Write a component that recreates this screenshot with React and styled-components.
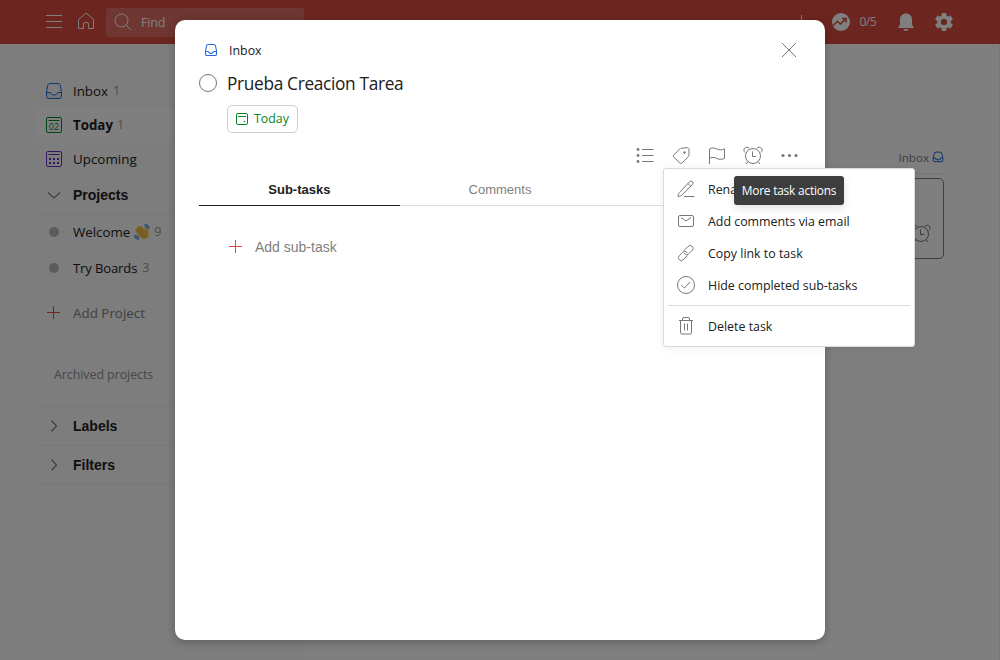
import React from 'react';
import styled, { createGlobalStyle } from 'styled-components';

const GlobalStyle = createGlobalStyle`
  * { box-sizing: border-box; }
  body { margin: 0; background: #fff; color: #202020; font-family: 'Open Sans', 'Noto Sans', sans-serif; }
  svg { display: block; flex: none; }
`;

const Page = styled.div`
  position: relative;
  width: 1000px;
  height: 660px;
  overflow: hidden;
  display: flex;
  flex-direction: column;
`;

const TopBar = styled.header`
  height: 44px;
  flex: none;
  background: #db4c3f;
  color: #fff;
  display: flex;
  align-items: center;
  justify-content: space-between;
  padding: 0 44px 0 42px;
`;

const BarGroup = styled.div`
  display: flex;
  align-items: center;
  gap: ${p => p.$gap || 0}px;
`;

const SearchField = styled.div`
  width: 198px;
  height: 29px;
  margin-left: 8px;
  padding-left: 5px;
  border-radius: 3px;
  background: rgba(255, 255, 255, 0.19);
  display: flex;
  align-items: center;
  gap: 6px;
`;

const Label = styled.span`
  font-family: ${p => (p.$arial ? "'Liberation Sans', Arial, sans-serif" : "'Open Sans', 'Noto Sans', sans-serif")};
  font-size: ${p => p.$size || 12.4}px;
  font-weight: ${p => (p.$bold ? 700 : 400)};
  letter-spacing: ${p => p.$track || 0}px;
  color: ${p => p.$color || 'inherit'};
  padding-top: ${p => p.$drop || 0}px;
  line-height: 20px;
  white-space: nowrap;
`;

const Body = styled.div`
  flex: 1;
  display: flex;
  min-height: 0;
`;

const Sidebar = styled.nav`
  width: 305px;
  flex: none;
  background: #fafafa;
  padding: 30px 0 0 35px;
`;

const NavRow = styled.div`
  height: ${p => p.$h || 34}px;
  margin-top: ${p => p.$mt || 0}px;
  padding-left: ${p => (p.$indent === undefined ? 7 : p.$indent)}px;
  display: flex;
  align-items: center;
  gap: 7px;
  border-radius: ${p => (p.$active ? 5 : 0)}px;
  background: ${p => (p.$active ? '#fff' : 'transparent')};
  border-top: ${p => (p.$top ? '1px solid #f0f0f0' : '0')};
  border-bottom: ${p => (p.$line ? '1px solid #f0f0f0' : '0')};
`;

const Name = styled.div`
  display: flex;
  align-items: center;
  gap: ${p => p.$gap || 5}px;
`;

const Bullet = styled.i`
  width: 10px;
  height: 10px;
  margin: 0 7px;
  border-radius: 50%;
  background: #b8b8b8;
`;

const Main = styled.main`
  flex: 1;
  padding: 103px 55px 0;
  border-right: 1px solid #f0f0f0;
`;

const Source = styled.div`
  height: 27px;
  display: flex;
  justify-content: flex-end;
  gap: 3px;
  align-items: flex-start;
  border-bottom: 1px solid #ececec;

  svg { margin-top: 4px; }
`;

const Card = styled.div`
  height: 81px;
  margin-top: 4px;
  padding: 42px 10px 0 0;
  border: 1px solid #7c7c7c;
  border-radius: 5px;
  display: flex;
  justify-content: flex-end;
`;

const Overlay = styled.div`
  position: absolute;
  inset: 0;
  background: rgba(0, 0, 0, 0.5);
  display: flex;
  justify-content: center;
  align-items: flex-start;
  padding-top: 20px;
`;

const Dialog = styled.section`
  width: 650px;
  height: 620px;
  padding: 18px 24px;
  border-radius: 10px;
  background: #fff;
  box-shadow: 0 2px 10px rgba(0, 0, 0, 0.25);
`;

const DialogHead = styled.div`
  height: 24px;
  display: flex;
  align-items: center;
  justify-content: space-between;
`;

const Location = styled.div`
  display: flex;
  align-items: center;
  gap: 11px;
  padding-left: 5px;
`;

const TitleRow = styled.div`
  height: 42px;
  display: flex;
  align-items: center;
  gap: 10px;
`;

const Title = styled.h1`
  margin: 0;
  padding-top: 1px;
  font-size: 17.3px;
  font-weight: 400;
  line-height: 24px;
  letter-spacing: -0.33px;
`;

const Check = styled.span`
  width: 18px;
  height: 18px;
  border: 1px solid #777;
  border-radius: 50%;
`;

const DateButton = styled.div`
  width: 71px;
  height: 28px;
  margin: 1px 0 0 28px;
  padding-left: 7px;
  border: 1px solid #cfcfcf;
  border-radius: 5px;
  display: flex;
  align-items: center;
  gap: 5px;
  color: #058527;
`;

const Tools = styled.div`
  height: 24px;
  margin-top: 10px;
  display: flex;
  justify-content: flex-end;
  gap: 12px;
`;

const Tabs = styled.div`
  height: 38px;
  margin-top: 1px;
  display: flex;
`;

const Tab = styled.div`
  flex: 1;
  display: flex;
  justify-content: center;
  align-items: center;
  padding-top: 7px;
  color: ${p => (p.$on ? '#202020' : '#808080')};
  border-bottom: 1px solid ${p => (p.$on ? '#202020' : '#dcdcdc')};
`;

const AddRow = styled.div`
  display: flex;
  align-items: center;
  gap: 7px;
  margin: 29px 0 0 25px;
`;

const Menu = styled.div`
  position: absolute;
  left: 663px;
  top: 168px;
  width: 252px;
  height: 179px;
  padding: 4px;
  background: #fff;
  border: 1px solid #dadada;
  border-radius: 3px;
  box-shadow: 0 1px 8px rgba(0, 0, 0, 0.08);
`;

const MenuItem = styled.div`
  height: 32px;
  padding-left: 6px;
  display: flex;
  align-items: center;
  gap: 10px;
`;

const Divider = styled.div`
  height: 1px;
  margin: 4px 0;
  background: #dcdcdc;
`;

const Tooltip = styled.div`
  position: absolute;
  left: 734px;
  top: 176px;
  width: 110px;
  height: 29px;
  padding-bottom: 1px;
  border-radius: 3px;
  background: #3d3d3d;
  color: #fff;
  display: flex;
  align-items: center;
  justify-content: center;
  box-shadow: 0 3px 10px rgba(0, 0, 0, 0.12);
`;

const Icon = ({ size = 24, color = '#777', children }) => (
  <svg width={size} height={size} viewBox="0 0 24 24" fill="none" stroke={color} strokeWidth="1">
    {children}
  </svg>
);

const InboxIcon = () => (
  <Icon color="#246fe0">
    <path fill="#246fe0" fillOpacity=".1" stroke="none" d="M4.500 13.500h4.200c.5 1.500 1.700 2.300 3.300 2.300s2.800-.8 3.300-2.300h4.200v4a2 2 0 0 1-2 2h-11a2 2 0 0 1-2-2z" />
    <path d="M7.800 4.500h8.400a2 2 0 0 1 1.950 1.500l1.350 7v4.500a2 2 0 0 1-2 2h-11a2 2 0 0 1-2-2V13l1.350-7A2 2 0 0 1 7.800 4.500z" />
    <path d="M4.500 13.500H8c.7 0 .8.300 1.100.9.5 1 1.500 1.600 2.900 1.600s2.400-.6 2.900-1.600c.3-.6.400-.9 1.100-.9h3.500" />
  </Icon>
);

const SmallInboxIcon = () => (
  <svg width="14" height="14" viewBox="0 0 14 14" fill="none" stroke="#246fe0" strokeWidth="1.100">
    <path d="M4 1.500h6a1.500 1.500 0 0 1 1.450 1.150L12.500 8v3a1.500 1.500 0 0 1-1.500 1.500H3A1.500 1.500 0 0 1 1.500 11V8l1.050-5.350A1.500 1.500 0 0 1 4 1.500z" />
    <path fill="#246fe0" fillOpacity=".12" d="M1.500 8.500h2.300c.5 0 .6.200.8.600.4.800 1.200 1.400 2.400 1.400s2-.6 2.400-1.400c.2-.4.300-.6.800-.6h2.300" />
  </svg>
);

const TinyInboxIcon = () => (
  <svg width="12" height="12" viewBox="0 0 12 12" fill="none" stroke="#3f7fe0" strokeWidth="1.200">
    <path d="M4.200 1.200h3.600c1.300 0 2 .8 2.200 2l.8 4v1.700a1.800 1.800 0 0 1-1.800 1.800H3a1.800 1.800 0 0 1-1.800-1.800V7.200l.8-4c.2-1.200.900-2 2.200-2z" />
    <path fill="#3f7fe0" fillOpacity=".25" d="M1.200 7.200h2c.3 1 1.200 1.600 2.800 1.600s2.500-.6 2.800-1.600h2" />
  </svg>
);

const PlusIcon = ({ color }) => <Icon color={color}><path d="M11.500 5v13M5 11.500h13" /></Icon>;

const AlarmIcon = () => (
  <Icon>
    <circle cx="12" cy="13" r="7.500" />
    <path d="M11.500 8.500v5H15M7 18.500 5 21M17 18.500l2 2.500" />
    <path d="M4 9.500C2.500 8 2.600 6.200 3.700 5.100s3.200-1.200 4.500.2M20 9.500c1.500-1.500 1.400-3.300.3-4.400s-3.200-1.200-4.500.2" />
  </Icon>
);

const TodayIcon = () => (
  <Icon color="#058527">
    <rect x="4.500" y="4.500" width="15" height="15" rx="1.500" />
    <path d="M6.500 7.500h11" />
    <text x="12" y="17.200" textAnchor="middle" fill="#058527" stroke="none" fontSize="9" fontFamily="Open Sans, sans-serif">02</text>
  </Icon>
);

const UpcomingIcon = () => (
  <Icon color="#692fc2">
    <rect x="4.500" y="4.500" width="15" height="15" rx="1.500" />
    <path d="M6.500 7.500h11" />
    <path strokeWidth="2" strokeDasharray="2 2" d="M7 12h10M7 16h10" />
  </Icon>
);

const WaveIcon = () => (
  <svg width="16" height="16" viewBox="0 0 16 16" fill="none">
    <path d="M10.500.8c2.500-.4 4.600 1.500 4.500 4M10.700 2.700c1.500-.1 2.400.8 2.500 2.200M.8 10.800c-.2 2.600 1.500 4.300 4.300 4.200M2.700 11.300c.1 1.400.9 2.100 2.300 2.200" stroke="#5f9fd3" strokeWidth="1.500" />
    <path d="M2 4.700c.7-.7 1.600-.4 2.100.2L3.300 3.300c-.3-1.200 1.100-1.900 1.900-.9l1 1.100c-.4-1.400 1.100-2 1.900-.9L11 6.200l.4-1.900c.3-1.300 2.300-1.100 2.500.3.200 2.500 1.300 4.700.7 6.800-.7 2.600-3.500 4-5.900 3.300C6.300 14 3.800 10.700 2 7.700c-.7-1.100-.8-2.200 0-3z" fill="#f2c14a" />
    <path d="m4 5 3.200 4.500M6.200 3.800l3 4.500" stroke="#d99a2b" strokeWidth=".6" />
  </svg>
);

const Chevron = ({ open }) => (
  <Icon color="#808080"><path strokeWidth="1.200" d={open ? 'm6 9.500 6 5.500 6-5.500' : 'm9.500 6.500 5 5.500-5 5.500'} /></Icon>
);

const menuIcons = {
  pen: <Icon><path d="M4 19.500c.2-2 .5-3 1.500-4L15.700 4.700a1.900 1.900 0 0 1 2.800 2.700L8 18c-1 1-2 1.300-4 1.500zM10 19.500h10.500M14 6.500l2.700 2.700" /></Icon>,
  mail: <Icon><rect x="4.500" y="6.500" width="15" height="11" rx="1.500" /><path d="m7 8.500 5 3.500 5-3.500" /></Icon>,
  link: (
    <Icon>
      <path d="m10 9.500 4.200-4.200a2.800 2.800 0 0 1 4 0 2.800 2.800 0 0 1 0 4l-3.500 3.500a2.800 2.800 0 0 1-4 0l-.6-.7" />
      <path d="m13.500 14.500-4.200 4.200a2.800 2.800 0 0 1-4 0 2.800 2.800 0 0 1 0-4l3.500-3.500a2.800 2.800 0 0 1 4 0l.6.700" />
    </Icon>
  ),
  check: <Icon><circle cx="12" cy="12" r="8.500" /><path d="m7.500 12.500 3 2.500 5.500-6" /></Icon>,
  trash: (
    <Icon>
      <path d="M5 6.500h14M8.500 6V5a1.500 1.500 0 0 1 1.500-1.500h4A1.500 1.500 0 0 1 15.500 5v1M6.500 7v11.500a1.500 1.500 0 0 0 1.500 1.500h8a1.500 1.500 0 0 0 1.500-1.500V7M10.500 9.500v7M13.500 9.500v7" />
    </Icon>
  ),
};

const Entry = ({ icon, text }) => (
  <MenuItem>{menuIcons[icon]}<Label $drop={2}>{text}</Label></MenuItem>
);

export default function App() {
  return (
    <Page>
      <GlobalStyle />
      <TopBar>
        <BarGroup>
          <Icon color="#fff"><path d="M4 5.500h16M4 11.500h16M4 17.500h16" /></Icon>
          <BarGroup $gap={8}>
            <span />
            <Icon color="#fff"><path d="M4.500 18.500v-9L12 3l7.500 6.500v9h-5v-4.500a1.500 1.500 0 0 0-1.500-1.500h-2A1.500 1.500 0 0 0 9.500 14v4.500z" /></Icon>
          </BarGroup>
          <SearchField>
            <Icon color="#fff"><circle cx="10.500" cy="10.500" r="6.500" /><path d="m15.500 15.500 4.500 4.500" /></Icon>
            <Label $size={12.600} $track={-0.200} $drop={2}>Find</Label>
          </SearchField>
        </BarGroup>
        <BarGroup $gap={15}>
          <PlusIcon color="#fff" />
          <BarGroup $gap={6}>
            <svg width="24" height="24" viewBox="0 0 24 24">
              <circle cx="12" cy="12" r="9" fill="#fff" />
              <path d="m4 15.500 4.500-4 3 2.500 5.500-5.500M13 8.500h4v4" fill="none" stroke="#db4c3f" strokeWidth="1.500" />
            </svg>
            <Label $size={12} $track={-0.500}>0/5</Label>
          </BarGroup>
          <BarGroup $gap={11}>
            <svg width="30" height="24" viewBox="-3 0 30 24" fill="#fff">
              <path d="M12 3.500c3.600 0 6 2.500 6 6v5.200l1.600 2.200c.4.600.1 1.100-.6 1.100H5c-.7 0-1-.5-.6-1.100L6 14.700V9.500c0-3.500 2.400-6 6-6zM9.500 19h5c-.4 1.300-1.300 2-2.500 2s-2.100-.7-2.500-2z" />
            </svg>
            <svg width="24" height="24" viewBox="0 0 24 24">
              <circle cx="12" cy="12" r="5" fill="none" stroke="#fff" strokeWidth="4" />
              <path d="M12 3v3.500M12 17.500V21M4.200 7.500l3 1.700M16.800 14.800l3 1.700M4.200 16.500l3-1.700M16.800 9.200l3-1.700" stroke="#fff" strokeWidth="4.600" />
              <circle cx="12" cy="12" r="3.100" fill="#db4c3f" />
            </svg>
          </BarGroup>
        </BarGroup>
      </TopBar>

      <Body>
        <Sidebar>
          <NavRow>
            <InboxIcon />
            <Name><Label $size={13.300}>Inbox</Label><Label $size={12.500} $color="#999">1</Label></Name>
          </NavRow>
          <NavRow $active>
            <TodayIcon />
            <Name $gap={4}><Label $size={13.300} $bold>Today</Label><Label $size={12.500} $color="#999">1</Label></Name>
          </NavRow>
          <NavRow>
            <UpcomingIcon />
            <Label $size={13.400}>Upcoming</Label>
          </NavRow>
          <NavRow $h={39} $line>
            <Chevron open />
            <Label $size={14} $bold $arial>Projects</Label>
          </NavRow>
          <NavRow $h={34}>
            <Bullet />
            <Name $gap={4}><Label $size={13.300}>Welcome</Label><WaveIcon /><Label $size={12.500} $color="#999">9</Label></Name>
          </NavRow>
          <NavRow $h={36} $mt={1}>
            <Bullet />
            <Name><Label $size={13} $track={-0.100}>Try Boards</Label><Label $size={12.500} $color="#999">3</Label></Name>
          </NavRow>
          <NavRow $h={34} $mt={10}>
            <PlusIcon color="#db4c3f" />
            <Label $size={13.400} $color="#808080">Add Project</Label>
          </NavRow>
          <NavRow $h={34} $mt={28} $indent={19}>
            <Label $size={12.300} $color="#909090">Archived projects</Label>
          </NavRow>
          <NavRow $h={40} $mt={14} $top $line>
            <Chevron />
            <Label $size={14} $bold $arial>Labels</Label>
          </NavRow>
          <NavRow $h={39} $line>
            <Chevron />
            <Label $size={14} $bold $arial>Filters</Label>
          </NavRow>
        </Sidebar>
        <Main>
          <Source>
            <Label $size={11.600} $color="#808080" $drop={1}>Inbox</Label>
            <TinyInboxIcon />
          </Source>
          <Card><AlarmIcon /></Card>
        </Main>
      </Body>

      <Overlay>
        <Dialog>
          <DialogHead>
            <Location>
              <SmallInboxIcon />
              <Label $drop={1}>Inbox</Label>
            </Location>
            <Icon><path d="m5 5 14 14M19 5 5 19" /></Icon>
          </DialogHead>
          <TitleRow>
            <Check />
            <Title>Prueba Creacion Tarea</Title>
          </TitleRow>
          <DateButton>
            <svg width="14" height="14" viewBox="0 0 14 14" fill="none" stroke="#058527">
              <rect x="1.500" y="1.500" width="11" height="11" rx="1.500" />
              <path d="M3 4.500h8" />
              <circle cx="9.500" cy="9.500" r=".8" fill="#058527" stroke="none" />
            </svg>
            <Label>Today</Label>
          </DateButton>
          <Tools>
            <Icon>
              <path d="M9 6.500h11.500M9 12.500h11.500M9 18.500h11.500" />
              <g fill="#777" stroke="none"><circle cx="5" cy="6.500" r="1.400" /><circle cx="5" cy="12.500" r="1.400" /><circle cx="5" cy="18.500" r="1.400" /></g>
            </Icon>
            <Icon>
              <path d="M12.200 5.300 18 4.700c1.200-.1 2 .6 2 1.800v5.700c0 .6-.2 1-.6 1.400L13 20c-.7.700-1.500.700-2.200 0l-6-6c-.7-.7-.7-1.500 0-2.200L11 5.800c.3-.3.700-.5 1.200-.5z" />
              <circle cx="15.500" cy="9.500" r="1.200" fill="#777" stroke="none" />
            </Icon>
            <Icon><path d="M4.500 21V6c2-1.300 4.700-1.300 7.300 0s5.600 1.200 7.700-.2v9.500c-2.200 1.300-5 1.400-7.700.1s-5.200-1.300-7.300 0" /></Icon>
            <AlarmIcon />
            <Icon><g fill="#777" stroke="none"><circle cx="6" cy="12.500" r="1.600" /><circle cx="12.500" cy="12.500" r="1.600" /><circle cx="19" cy="12.500" r="1.600" /></g></Icon>
          </Tools>
          <Tabs>
            <Tab $on><Label $arial $bold $size={13}>Sub-tasks</Label></Tab>
            <Tab><Label $arial $size={13}>Comments</Label></Tab>
            <Tab />
          </Tabs>
          <AddRow>
            <PlusIcon color="#db4c3f" />
            <Label $arial $size={14} $color="#808080">Add sub-task</Label>
          </AddRow>
        </Dialog>
      </Overlay>

      <Menu>
        <Entry icon="pen" text="Rename" />
        <Entry icon="mail" text="Add comments via email" />
        <Entry icon="link" text="Copy link to task" />
        <Entry icon="check" text="Hide completed sub-tasks" />
        <Divider />
        <Entry icon="trash" text="Delete task" />
      </Menu>
      <Tooltip><Label $size={11.900} $track={-0.200}>More task actions</Label></Tooltip>
    </Page>
  );
}
